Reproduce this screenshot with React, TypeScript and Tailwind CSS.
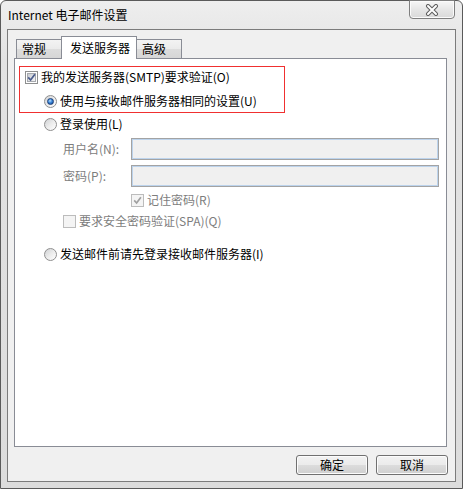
import React from "react";

const font = { fontFamily: '"Noto Sans CJK SC", "Noto Sans", sans-serif' };

function CheckBox({ checked, disabled }: { checked?: boolean; disabled?: boolean }) {
  return (
    <span
      className={
        disabled
          ? "flex h-[13px] w-[13px] shrink-0 items-center justify-center border border-[#bcbcbc] bg-[#f4f4f4]"
          : "flex h-[13px] w-[13px] shrink-0 items-center justify-center border border-[#8e8f8f] bg-white"
      }
    >
      <span
        className={
          disabled
            ? "flex h-[9px] w-[9px] items-center justify-center bg-[#f4f4f4]"
            : "flex h-[9px] w-[9px] items-center justify-center border border-[#a6a9ae] bg-gradient-to-br from-[#c9ccd1] to-[#f4f4f5]"
        }
      >
        {checked && (
          <svg width="9" height="9" viewBox="0 0 9 9" className="shrink-0">
            <path
              d="M1.2 4.4 L3.6 7 L7.9 1.2"
              fill="none"
              stroke={disabled ? "#a0a0a0" : "#4a5c8c"}
              strokeWidth="1.7"
            />
          </svg>
        )}
      </span>
    </span>
  );
}

function Radio({ selected }: { selected?: boolean }) {
  return (
    <span className="flex h-[13px] w-[13px] shrink-0 items-center justify-center rounded-full border border-[#8f8f8f] bg-gradient-to-br from-[#cfd1d4] via-[#ececec] to-white">
      {selected && (
        <span className="h-[7px] w-[7px] rounded-full border border-[#1b3f78] bg-[radial-gradient(circle_at_40%_35%,#b8e0ff_0%,#3a86d8_45%,#123e86_100%)]" />
      )}
    </span>
  );
}

function WinButton({ label }: { label: string }) {
  return (
    <div className="flex h-[20px] w-[72px] items-center justify-center rounded-[3px] border border-[#707070] bg-[linear-gradient(#f2f2f2_0%,#ebebeb_50%,#dddddd_50%,#cfcfcf_100%)] text-[12px] text-black shadow-[inset_0_0_0_1px_#fcfcfc]">
      {label}
    </div>
  );
}

export default function App() {
  return (
    <div style={font} className="h-[489px] w-[463px] overflow-hidden bg-white text-[12px] leading-[16px] text-black">
      <div className="flex h-[489px] w-[463px] flex-col rounded-t-[6px] border border-[#5a5a5a] bg-[linear-gradient(#eeeeee,#e3e3e3_60px,#dcdcdc)]">
        {/* title bar */}
        <div className="flex h-[28px] items-start justify-between pl-[7px] pr-[7px]">
          <span className="pt-[6px] text-[12px] leading-[16px] text-black">Internet 电子邮件设置</span>
          <div className="mt-[-1px] flex h-[19px] w-[46px] items-center justify-center rounded-b-[4px] border border-[#7f7f7f] bg-[linear-gradient(#f7f7f7,#e6e6e6_50%,#d9d9d9)] shadow-[inset_0_0_0_1px_#fbfbfb]">
            <svg width="14" height="12" viewBox="0 0 14 12">
              <path d="M3 2 L11 10 M11 2 L3 10" stroke="#5e5e5e" strokeWidth="4" strokeLinecap="round" />
              <path d="M3 2 L11 10 M11 2 L3 10" stroke="#ffffff" strokeWidth="2" strokeLinecap="round" />
            </svg>
          </div>
        </div>

        {/* client area */}
        <div className="mx-[6px] mb-[6px] flex flex-1 flex-col border border-[#7b7b7b] bg-[#f0f0f0] pl-[6px] pr-[8px] pt-[6px]">
          {/* tabs */}
          <div className="flex h-[22px] items-end pl-[2px]">
            <div className="flex h-[19px] w-[45px] items-center border border-b-0 border-r-0 border-[#898c95] bg-[linear-gradient(#f3f3f3,#ebebeb_50%,#dddddd_50%,#d6d6d6)] pl-[5px]">
              常规
            </div>
            <div className="relative z-10 mb-[-1px] flex h-[23px] w-[76px] items-center border border-b-0 border-[#898c95] bg-white pl-[8px] pb-[1px]">
              发送服务器
            </div>
            <div className="flex h-[19px] w-[45px] items-center border border-b-0 border-l-0 border-[#898c95] bg-[linear-gradient(#f3f3f3,#ebebeb_50%,#dddddd_50%,#d6d6d6)] pl-[5px]">
              高级
            </div>
          </div>

          {/* tab panel */}
          <div className="flex flex-1 flex-col border border-[#898c95] bg-white">
            <div className="ml-[4px] mt-[7px] flex h-[47px] w-[266px] flex-col gap-[4px] border border-[#f03030]">
              <div className="flex h-[20px] items-center gap-[3px] pl-[5px]">
                <CheckBox checked />
                <span>我的发送服务器(SMTP)要求验证(O)</span>
              </div>
              <div className="flex h-[20px] items-center gap-[3px] pl-[24px]">
                <Radio selected />
                <span>使用与接收邮件服务器相同的设置(U)</span>
              </div>
            </div>

            <div className="mt-[1px] flex h-[20px] items-center gap-[3px] pl-[29px]">
              <Radio />
              <span>登录使用(L)</span>
            </div>

            <div className="mt-[4px] flex h-[22px] items-center pl-[48px]">
              <span className="w-[68px] text-[#7d7d7d]">用户名(N):</span>
              <div className="h-[22px] w-[308px] border border-[#a3a3a3] bg-[#f0f0f0] shadow-[inset_0_0_0_1px_#bcd3ec]" />
            </div>

            <div className="mt-[5px] flex h-[22px] items-center pl-[48px]">
              <span className="w-[68px] text-[#7d7d7d]">密码(P):</span>
              <div className="h-[22px] w-[308px] border border-[#a3a3a3] bg-[#f0f0f0] shadow-[inset_0_0_0_1px_#bcd3ec]" />
            </div>

            <div className="mt-[3px] flex h-[20px] items-center gap-[3px] pl-[116px]">
              <CheckBox checked disabled />
              <span className="text-[#7d7d7d]">记住密码(R)</span>
            </div>

            <div className="mt-[1px] flex h-[20px] items-center gap-[3px] pl-[48px]">
              <CheckBox disabled />
              <span className="text-[#7d7d7d]">要求安全密码验证(SPA)(Q)</span>
            </div>

            <div className="mt-[13px] flex h-[20px] items-center gap-[3px] pl-[29px]">
              <Radio />
              <span>发送邮件前请先登录接收邮件服务器(I)</span>
            </div>
          </div>

          {/* buttons */}
          <div className="mr-[-1px] flex h-[34px] items-start justify-end gap-[8px] pt-[8px]">
            <WinButton label="确定" />
            <WinButton label="取消" />
          </div>
        </div>
      </div>
    </div>
  );
}
